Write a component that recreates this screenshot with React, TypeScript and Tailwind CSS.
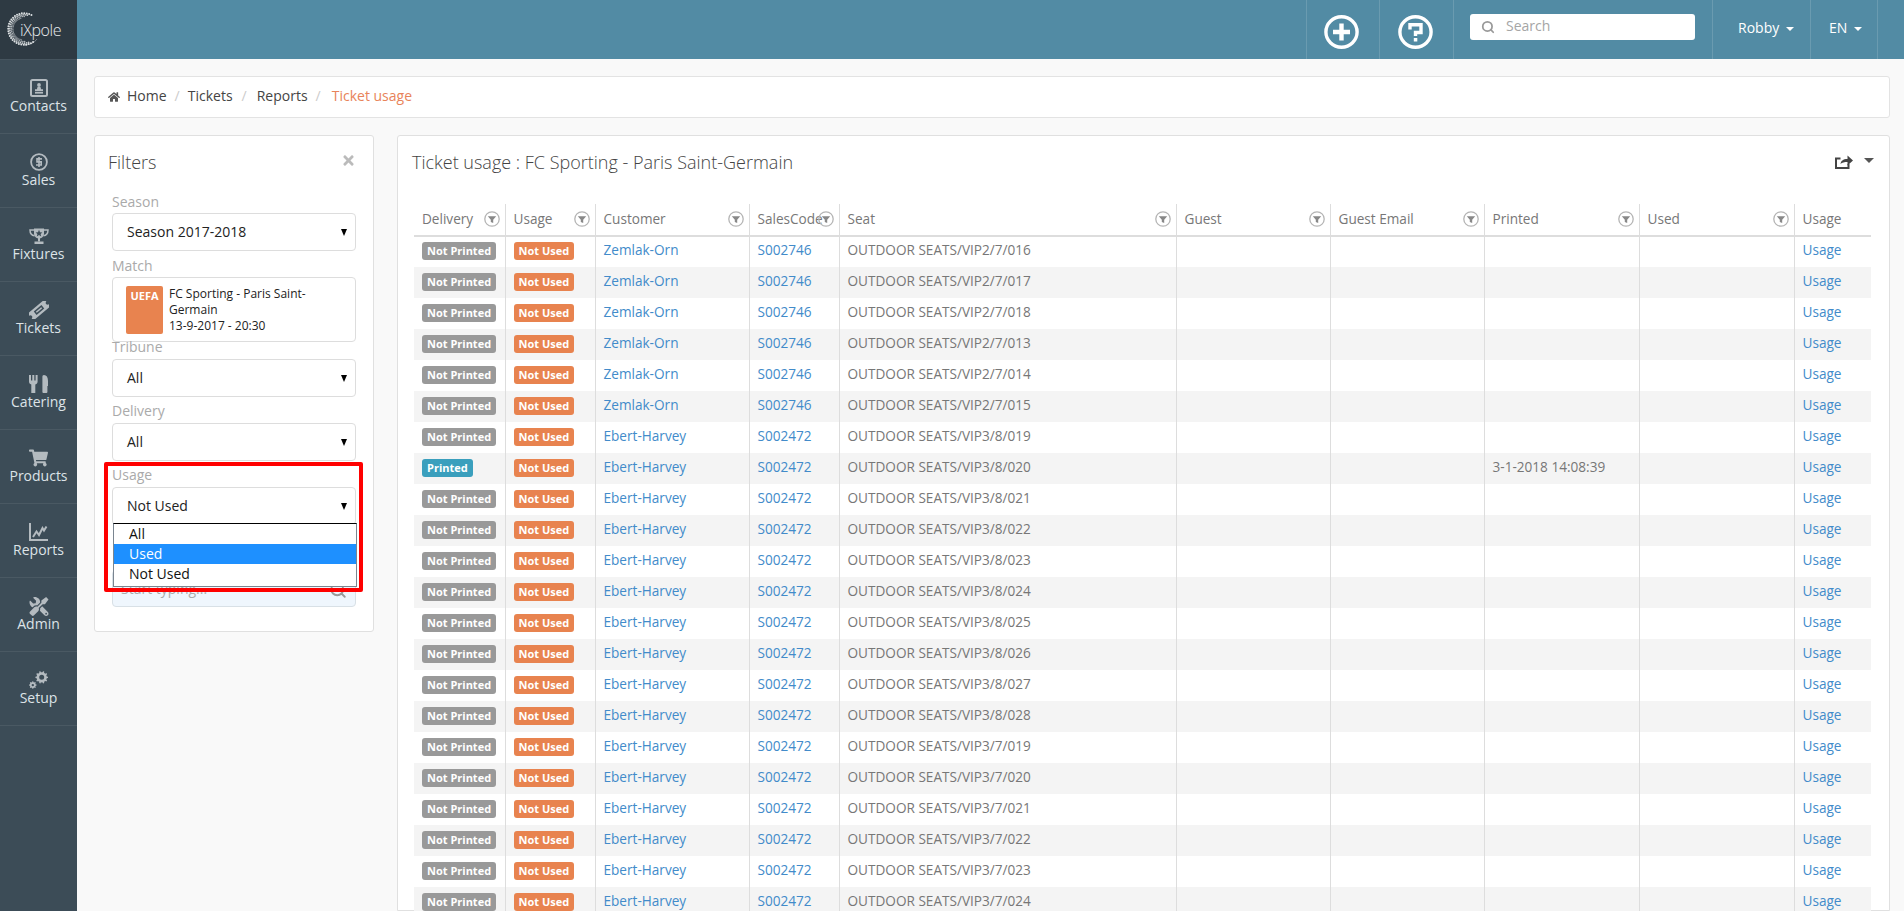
import { FaHome, FaShoppingCart, FaTimes, FaTools } from "react-icons/fa"
import { Search } from "lucide-react"
import type { ReactNode } from "react"

function gearPath(cx: number, cy: number, outer: number, inner: number, hole: number, teeth: number) {
  let d = ""
  const step = (Math.PI * 2) / teeth
  for (let i = 0; i < teeth; i++) {
    const a = i * step
    const pts = [
      [inner, a - step * 0.5],
      [inner, a - step * 0.26],
      [outer, a - step * 0.16],
      [outer, a + step * 0.16],
      [inner, a + step * 0.26],
    ]
    pts.forEach(([r, t], j) => {
      d += `${i === 0 && j === 0 ? "M" : "L"}${(cx + r * Math.cos(t)).toFixed(2)} ${(cy + r * Math.sin(t)).toFixed(2)}`
    })
  }
  d += `Z M${cx + hole} ${cy}a${hole} ${hole} 0 1 0 ${-hole * 2} 0a${hole} ${hole} 0 1 0 ${hole * 2} 0Z`
  return d
}

function Logo() {
  const dots: { x: number; y: number; r: number; o: number }[] = []
  ;[15.800, 14.200, 12.600, 11.100].forEach((radius, ring) => {
    const span = 125 - ring * 16
    for (let a = 180 - span; a <= 180 + span; a += 9 - ring * 0.5) {
      const t = (a * Math.PI) / 180
      dots.push({ x: 24 + radius * Math.cos(t), y: 29 + radius * Math.sin(t), r: 1 - ring * 0.12, o: 0.95 - ring * 0.12 })
    }
  })
  return (
    <div className="relative h-[60px] bg-[#2e3a43] border-b border-[#46545e]">
      <svg width="77" height="60" className="block">
        {dots.map((d, i) => (
          <circle key={i} cx={d.x} cy={d.y} r={d.r} fill="#e6e9eb" opacity={d.o} />
        ))}
        <path d="M24 45c6 0 10-2 13-6" stroke="#e6e9eb" strokeWidth="0.7" fill="none" opacity="0.6" />
      </svg>
      <span className="absolute left-[20px] top-[20px] text-[16px] leading-[20px] font-light tracking-[-0.4px] text-[#e8ebed]">iXpole</span>
    </div>
  )
}

const sideBg = "#3c4c57"

const navItems: { label: string; icon: ReactNode }[] = [
  {
    label: "Contacts",
    icon: (
      <svg width="18" height="18" viewBox="0 0 18 18" fill="currentColor">
        <rect x="1" y="1" width="16" height="16" rx="1.5" fill="none" stroke="currentColor" strokeWidth="2" />
        <circle cx="9" cy="6" r="1.9" />
        <path d="M7.500 8h3l.6 2.200H13V12H5v-1.800h1.900z" />
        <rect x="5" y="12.800" width="8" height="1.800" />
      </svg>
    ),
  },
  {
    label: "Sales",
    icon: (
      <svg width="18" height="18" viewBox="0 0 18 18" fill="none" stroke="currentColor">
        <circle cx="9" cy="9" r="7.900" strokeWidth="1.800" />
        <path d="M12 5.900H7v3h4.200v3.100H6M9 4v10" strokeWidth="1.600" />
      </svg>
    ),
  },
  {
    label: "Fixtures",
    icon: (
      <svg width="20" height="17" viewBox="0 0 20 17" fill="currentColor">
        <path d="M5 0.500h10v5c0 2.800-2.200 5-5 5s-5-2.200-5-5z" />
        <path d="M5 2H1c0 3.400 1.400 5.400 4.600 5.800M15 2h4c0 3.400-1.400 5.400-4.600 5.800" fill="none" stroke="currentColor" strokeWidth="1.500" />
        <rect x="9" y="10" width="2" height="3.500" />
        <rect x="5.500" y="13.500" width="9" height="2.500" />
        <polygon points="10,1.800 11,4.200 13.400,4.400 11.600,6 12.200,8.400 10,7.100 7.800,8.400 8.400,6 6.600,4.400 9,4.200" fill={sideBg} />
      </svg>
    ),
  },
  {
    label: "Tickets",
    icon: (
      <svg width="20" height="18" viewBox="0 0 20 18">
        <g transform="rotate(-40 10 9)">
          <path d="M-1 4.500h22v2.800a1.700 1.700 0 0 0 0 3.400v2.800H-1v-2.800a1.700 1.700 0 0 0 0-3.400z" fill="currentColor" />
          <rect x="5" y="6.800" width="10" height="4.400" fill={sideBg} />
          <rect x="6.500" y="8.200" width="7" height="1.600" fill="currentColor" />
        </g>
      </svg>
    ),
  },
  {
    label: "Catering",
    icon: (
      <svg width="19" height="18" viewBox="0 0 19 18" fill="currentColor">
        <path d="M0 0h2v5.500h1.300V0h2v5.500h1.300V0h2v6.500c0 1.500-.8 2.600-2.300 3V18H2.300V9.500C.8 9.100 0 8 0 6.500z" />
        <path d="M15 0c2.500 0 4 2 4 6v5h-.6v6a1 1 0 0 1-1 1h-3a1 1 0 0 1-1-1V2c0-1.200.4-2 1.600-2z" />
      </svg>
    ),
  },
  { label: "Products", icon: <FaShoppingCart className="w-[19px] h-[18px]" /> },
  {
    label: "Reports",
    icon: (
      <svg width="19" height="18" viewBox="0 0 19 18" fill="none" stroke="currentColor" strokeWidth="2">
        <path d="M1 0v17h18" />
        <path d="M4 14l3.500-5.500 2.500 3.500 3.500-7 1.500 2.500 2.500-4" />
      </svg>
    ),
  },
  { label: "Admin", icon: <FaTools className="w-[22px] h-[19px] -scale-x-100" /> },
  {
    label: "Setup",
    icon: (
      <svg width="19" height="18" viewBox="0 0 19 18" fill="currentColor" fillRule="evenodd">
        <path d={gearPath(12.700, 6.300, 6.300, 5.100, 2.500, 10)} />
        <path d={gearPath(3.800, 14.100, 3.800, 3, 1.200, 8)} />
      </svg>
    ),
  },
]

function Sidebar() {
  return (
    <aside className="w-[77px] shrink-0 bg-[#3c4c57] flex flex-col">
      <Logo />
      {navItems.map((item) => (
        <div key={item.label} className="h-[74px] pt-[19px] border-b border-[#4a5963] flex flex-col items-center">
          <div className="h-[18px] flex items-center justify-center text-[#b4bbc0]">{item.icon}</div>
          <div className="text-[14px] leading-[19px] -mt-[1px] text-[#dde3e7]">{item.label}</div>
        </div>
      ))}
    </aside>
  )
}

function Caret({ className }: { className: string }) {
  return <span className={`inline-block w-0 h-0 border-x-4 border-t-4 border-x-transparent ${className}`} />
}

function Topbar() {
  return (
    <header className="h-[59px] shrink-0 bg-[#528ba4] flex justify-end pr-[26px] text-white text-[14px]">
      <div className="w-[73px] border-l border-[#6a9bb0] flex items-center justify-center pr-[4px]">
        <svg width="35" height="34" viewBox="0 0 35 34" fill="none" className="mt-[5px]">
          <ellipse cx="17.500" cy="17" rx="15.600" ry="15.200" stroke="#fff" strokeWidth="3.400" />
          <path d="M17.500 8.500v17M9 17h17" stroke="#fff" strokeWidth="4.400" />
        </svg>
      </div>
      <div className="w-[74px] border-l border-[#6a9bb0] flex items-center justify-center pr-[2px]">
        <svg width="35" height="34" viewBox="0 0 35 34" fill="none" className="mt-[5px]">
          <ellipse cx="17.500" cy="17" rx="15.600" ry="15.200" stroke="#fff" strokeWidth="3.400" />
          <path d="M12 14.500V9.800H23V17.500H17.500V21" stroke="#fff" strokeWidth="3.400" />
          <rect x="15.800" y="23" width="3.500" height="3.500" fill="#fff" />
        </svg>
      </div>
      <div className="w-[259px] border-l border-[#6a9bb0] pl-[16px] pt-[14px]">
        <div className="w-[225px] h-[26px] bg-white rounded-[3px] flex items-center pl-[11px] gap-[11px] text-[#a5a5a5]">
          <Search className="w-[14px] h-[14px] text-[#999]" strokeWidth={3} />
          <span className="leading-[22px] mb-[2px]">Search</span>
        </div>
      </div>
      <div className="w-[98px] border-l border-[#6a9bb0] pl-[25px] pt-[18px] leading-[20px]">
        Robby <Caret className="border-t-white ml-[3px] align-middle" />
      </div>
      <div className="w-[68px] border-x border-[#6a9bb0] pl-[18px] pt-[18px] leading-[20px]">
        EN <Caret className="border-t-white ml-[3px] align-middle" />
      </div>
    </header>
  )
}

function Breadcrumb() {
  return (
    <nav className="h-[42px] bg-white border border-[#e3e3e3] rounded-[3px] flex items-center pl-[13px] pb-[3px] text-[14px] text-[#444]">
      <FaHome className="w-[12px] h-[12px] text-[#555] mr-[7px] mt-[2px]" />
      <span>Home</span>
      <span className="text-[#ccc] mx-[8px]">/</span>
      <span>Tickets</span>
      <span className="text-[#ccc] ml-[9px] mr-[10px]">/</span>
      <span>Reports</span>
      <span className="text-[#ccc] ml-[8px] mr-[11px]">/</span>
      <span className="text-[#e8835a]">Ticket usage</span>
    </nav>
  )
}

function FieldLabel({ children, tight, className = "" }: { children: ReactNode; tight?: boolean; className?: string }) {
  return <div className={`h-[22px] text-[14px] text-[#aaa] ${tight ? "leading-[19px]" : "leading-[22px]"} ${className}`}>{children}</div>
}

function SelectBox({ value }: { value: string }) {
  return (
    <div className="h-[38px] bg-white border border-[#ddd] rounded-[4px] flex items-center justify-between pl-[14px] pr-[8px] text-[14px] text-[#222]">
      <span className="mb-[2px]">{value}</span>
      <span className="w-0 h-0 border-x-[3.500px] border-t-[7px] border-x-transparent border-t-black" />
    </div>
  )
}

function FiltersPanel() {
  return (
    <section className="relative w-[280px] h-[497px] shrink-0 bg-white border border-[#e0e0e0] rounded-[3px] px-[17px]">
      <div className="flex justify-between pt-[14px] h-[55px]">
        <h2 className="text-[18px] leading-[24px] font-light text-[#444] -ml-[4px]">Filters</h2>
        <FaTimes className="w-[13px] h-[15px] text-[#bbb] mt-[3px] mr-[1px]" />
      </div>
      <FieldLabel>Season</FieldLabel>
      <SelectBox value="Season 2017-2018" />
      <FieldLabel className="mt-[4px]">Match</FieldLabel>
      <div className="h-[65px] bg-white border border-[#ddd] rounded-[4px] flex pt-[8px] pl-[13px] text-[12px] leading-[16px] text-[#222]">
        <div className="w-[37px] h-[48px] bg-[#e8834f] rounded-[2px] text-white font-bold text-[11px] text-center pt-[2px] shrink-0">UEFA</div>
        <div className="ml-[6px] w-[150px] font-medium">
          FC Sporting - Paris Saint-Germain
          <br />
          13-9-2017 - 20:30
        </div>
      </div>
      <FieldLabel tight className="-mt-[5px]">Tribune</FieldLabel>
      <SelectBox value="All" />
      <FieldLabel tight className="mt-[4px]">Delivery</FieldLabel>
      <SelectBox value="All" />
      <FieldLabel tight className="mt-[4px]">Usage</FieldLabel>
      <SelectBox value="Not Used" />
      <div className="mt-[45px] h-[37px] bg-[#eff6fd] border border-[#d8e0e6] rounded-[4px] flex items-center justify-between pl-[8px] pr-[8px] pb-[1px] text-[14px] text-[#aaa]">
        <span>Start typing...</span>
        <Search className="w-[18px] h-[18px] text-[#999] mt-[4px]" strokeWidth={2.500} />
      </div>

      {/* open select list + red annotation */}
      <div className="absolute left-[18px] top-[387px] w-[244px] h-[64px] bg-white border border-[#7a8590] border-t-black text-[14px] leading-[20px] text-[#111]">
        <div className="pl-[15px]">All</div>
        <div className="pl-[15px] bg-[#1e90ff] text-white">Used</div>
        <div className="pl-[15px]">Not Used</div>
      </div>
      <div className="absolute left-[9px] top-[326px] w-[259px] h-[130px] border-4 border-[#ff0000] rounded-[2px]" />
    </section>
  )
}

function FilterIcon() {
  return (
    <svg width="16" height="16" viewBox="0 0 16 16" className="absolute right-[5px] top-[7px]">
      <circle cx="8" cy="8" r="7.200" fill="none" stroke="#b5b5b5" strokeWidth="1.300" />
      <path d="M3.800 5.200h8.400L9.200 8.800v3.200l-2.400-1V8.800z" fill="#888" />
    </svg>
  )
}

function Badge({ color, children }: { color: string; children: ReactNode }) {
  return <span className={`inline-block h-[18px] leading-[18px] px-[5px] rounded-[3px] text-[11px] font-bold text-white ${color}`}>{children}</span>
}

const headers = [
  { label: "Delivery", width: "w-[91px]" },
  { label: "Usage", width: "w-[90px]" },
  { label: "Customer", width: "w-[154px]" },
  { label: "SalesCode", width: "w-[90px]" },
  { label: "Seat", width: "w-[337px]" },
  { label: "Guest", width: "w-[154px]" },
  { label: "Guest Email", width: "w-[154px]" },
  { label: "Printed", width: "w-[155px]" },
  { label: "Used", width: "w-[155px]" },
  { label: "Usage", width: "w-[77px]" },
]

const rows = [
  ...["016", "017", "018", "013", "014", "015"].map((n) => ({ customer: "Zemlak-Orn", code: "S002746", seat: `OUTDOOR SEATS/VIP2/7/${n}` })),
  ...["019", "020", "021", "022", "023", "024", "025", "026", "027", "028"].map((n) => ({ customer: "Ebert-Harvey", code: "S002472", seat: `OUTDOOR SEATS/VIP3/8/${n}` })),
  ...["019", "020", "021", "022", "023", "024"].map((n) => ({ customer: "Ebert-Harvey", code: "S002472", seat: `OUTDOOR SEATS/VIP3/7/${n}` })),
]

function UsageTable() {
  return (
    <table className="table-fixed border-collapse w-[1457px] text-[13.600px] text-[#777]">
      <colgroup>
        {headers.map((h, i) => (
          <col key={i} className={h.width} />
        ))}
      </colgroup>
      <thead>
        <tr className="h-[32px] border-b-2 border-[#ddd]">
          {headers.map((h, i) => (
            <th key={i} className={`relative font-normal text-left px-[8px] whitespace-nowrap ${i < 9 ? "border-r border-[#ddd]" : ""}`}>
              {h.label}
              {i < 9 && <FilterIcon />}
            </th>
          ))}
        </tr>
      </thead>
      <tbody>
        {rows.map((r, i) => (
          <tr key={i} className={`h-[31px] ${i % 2 === 1 ? "bg-[#f4f4f4]" : "bg-white"}`}>
            <td className="px-[8px] pb-[3px] border-r border-[#ddd]">
              {i === 7 ? <Badge color="bg-[#3a9fbd]">Printed</Badge> : <Badge color="bg-[#999]">Not Printed</Badge>}
            </td>
            <td className="px-[8px] pb-[3px] border-r border-[#ddd]">
              <Badge color="bg-[#e8834f]">Not Used</Badge>
            </td>
            <td className="px-[8px] pb-[3px] border-r border-[#ddd] text-[#428bca]">{r.customer}</td>
            <td className="px-[8px] pb-[3px] border-r border-[#ddd] text-[#428bca]">{r.code}</td>
            <td className="px-[8px] pb-[3px] border-r border-[#ddd]">{r.seat}</td>
            <td className="border-r border-[#ddd]" />
            <td className="border-r border-[#ddd]" />
            <td className="px-[8px] pb-[3px] border-r border-[#ddd]">{i === 7 ? "3-1-2018 14:08:39" : ""}</td>
            <td className="border-r border-[#ddd]" />
            <td className="px-[8px] pb-[3px] text-[#428bca]">Usage</td>
          </tr>
        ))}
      </tbody>
    </table>
  )
}

export default function App() {
  return (
    <div className="flex h-screen overflow-hidden font-['Open_Sans',sans-serif]">
      <Sidebar />
      <div className="flex-1 flex flex-col min-w-0">
        <Topbar />
        <main className="flex-1 bg-[#f9f9f9] pl-[17px] pr-[14px] pt-[17px] flex flex-col gap-[17px] min-h-0">
          <Breadcrumb />
          <div className="flex gap-[23px] flex-1 min-h-0">
            <FiltersPanel />
            <section className="flex-1 bg-white border border-[#e0e0e0] rounded-t-[3px] px-[16px]">
              <div className="flex justify-between h-[68px] pt-[14px]">
                <h1 className="text-[18px] leading-[24px] font-light text-[#444] -ml-[2px]">Ticket usage : FC Sporting - Paris Saint-Germain</h1>
                <div className="flex items-start gap-[11px] pt-[5px] -mr-[2px] text-[#444]">
                  <svg width="18" height="14" viewBox="0 0 18 14">
                    <path d="M5.500 3.500H1v9.500h12.500V9" fill="none" stroke="currentColor" strokeWidth="2" />
                    <path d="M5.500 9c.3-3 2.500-5 7-5V.5l5.500 5-5.500 5V7c-3 0-5.500.5-7 2z" fill="currentColor" />
                  </svg>
                  <span className="w-0 h-0 border-x-[5px] border-t-[5px] border-x-transparent border-t-[#555] mt-[3px] mr-[1px]" />
                </div>
              </div>
              <UsageTable />
            </section>
          </div>
        </main>
      </div>
    </div>
  )
}
